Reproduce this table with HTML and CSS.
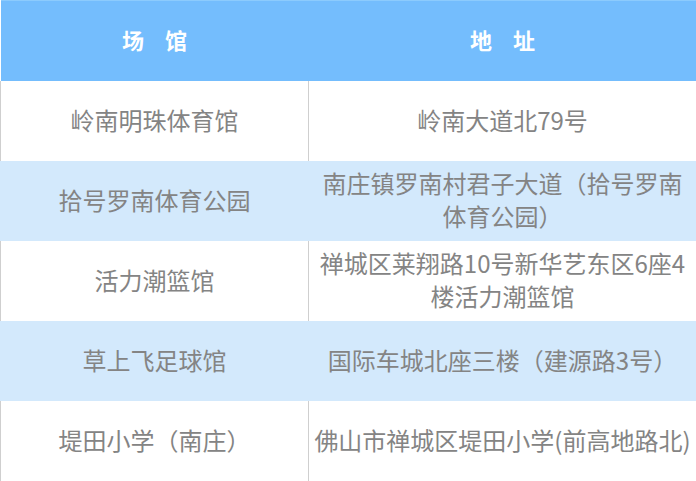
FILE: index.html
```html
<!DOCTYPE html>
<html lang="zh">
<head>
<meta charset="utf-8">
<link rel="stylesheet" href="styles.css">
</head>
<body>
<table class="venues">
  <colgroup><col class="c1"><col class="c2"></colgroup>
  <thead>
    <tr><th>场 馆</th><th>地 址</th></tr>
  </thead>
  <tbody>
    <tr><td>岭南明珠体育馆</td><td>岭南大道北79号</td></tr>
    <tr class="alt"><td>拾号罗南体育公园</td><td>南庄镇罗南村君子大道（拾号罗南<br>体育公园）</td></tr>
    <tr><td>活力潮篮馆</td><td>禅城区莱翔路10号新华艺东区6座4<br>楼活力潮篮馆</td></tr>
    <tr class="alt"><td>草上飞足球馆</td><td>国际车城北座三楼（建源路3号）</td></tr>
    <tr><td>堤田小学（南庄）</td><td>佛山市禅城区堤田小学(前高地路北)</td></tr>
  </tbody>
</table>
</body>
</html>
```
FILE: styles.css
```css
html, body {
  margin: 0;
  padding: 0;
  background: #ffffff;
}
body {
  font-family: "Noto Sans CJK SC", "Noto Sans", sans-serif;
}
.venues {
  width: 696px;
  border-collapse: collapse;
  table-layout: fixed;
}
.c1 { width: 308px; }
.c2 { width: 388px; }
.venues th {
  height: 80px;
  padding: 0 0 4px;
  box-sizing: border-box;
  background: #74bdfd;
  color: #ffffff;
  font-size: 22px;
  font-weight: bold;
  letter-spacing: 8px;
  text-indent: 8px;
  border-top: 1px solid #8ccbfd;
}
.venues td {
  height: 80px;
  padding: 0 0 3px;
  box-sizing: border-box;
  text-align: center;
  vertical-align: middle;
  color: #848484;
  font-size: 24px;
  line-height: 33px;
  white-space: nowrap;
  border-left: 1px solid #cfcfcf;
  border-right: 1px solid #cfcfcf;
}
.venues tr.alt td {
  background: #d3e9fc;
  border-color: #d3e9fc;
}
```
